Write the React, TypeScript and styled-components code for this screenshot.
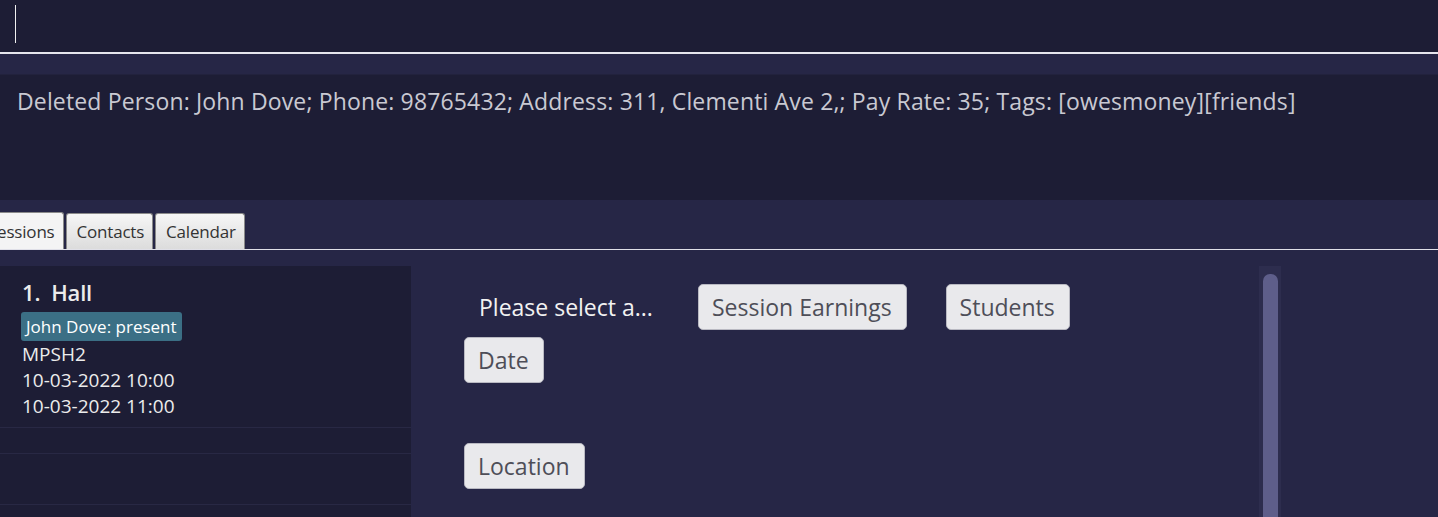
import React from "react";
import styled, { createGlobalStyle } from "styled-components";

const DARK = "#1d1d35";
const LIGHT = "#262646";

const Global = createGlobalStyle`
  html, body { margin: 0; padding: 0; background: ${LIGHT}; }
  body { font-family: "Open Sans", "Noto Sans", sans-serif; }
  * { box-sizing: border-box; }
`;

const Page = styled.div`
  width: 1438px;
  height: 517px;
  overflow: hidden;
  display: flex;
  flex-direction: column;
  background: ${LIGHT};
`;

const CommandBox = styled.div`
  height: 54px;
  flex: none;
  background: ${DARK};
  border-bottom: 2px solid #e6e6ee;
  padding: 5px 0 0 15px;
`;

const Caret = styled.div`
  width: 1px;
  height: 38px;
  background: #f0f0f0;
`;

const Strip = styled.div`
  height: 21px;
  flex: none;
  background: ${LIGHT};
  border-bottom: 1px solid #22223d;
`;

const ResultBox = styled.div`
  height: 125px;
  flex: none;
  background: ${DARK};
  padding: 11px 17px;
  color: #c9c9d2;
  font-size: 23px;
  line-height: 31px;
  white-space: nowrap;
  letter-spacing: 0.15px;
`;

const TabHeader = styled.div`
  flex: none;
  padding-top: 12px;
  border-bottom: 1px solid #e0e0e8;
`;

const TabRow = styled.div`
  display: flex;
  gap: 2px;
  margin-left: -23px;
  height: 37px;
  align-items: flex-end;
`;

const Tab = styled.div<{ $active?: boolean }>`
  height: ${(p) => (p.$active ? "37px" : "36px")};
  padding: 0 8px 0 10px;
  display: flex;
  align-items: center;
  font-size: 17px;
  color: #333;
  border: 1px solid #8a8a8a;
  border-bottom: none;
  border-radius: 3px 3px 0 0;
  background: ${(p) =>
    p.$active ? "#f4f4f4" : "linear-gradient(#f6f6f6, #dcdcdc)"};
  letter-spacing: -0.2px;
`;

const Content = styled.div`
  flex: 1;
  display: flex;
  padding-top: 16px;
  min-height: 0;
`;

const ListPanel = styled.div`
  width: 411px;
  flex: none;
  background: ${DARK};
  display: flex;
  flex-direction: column;
`;

const Card = styled.div`
  height: 162px;
  padding: 11px 22px;
  border-bottom: 1px solid #282844;
  display: flex;
  flex-direction: column;
  align-items: flex-start;
  color: #f0f0f0;
`;

const CardTitle = styled.div`
  font-size: 22px;
  font-weight: 600;
  line-height: 30px;
  letter-spacing: -0.2px;
  white-space: pre;
  color: #ececec;
`;

const TagChip = styled.div`
  margin-top: 5px;
  margin-left: -1px;
  background: #3b6f85;
  border-radius: 3px;
  padding: 0 5px;
  height: 29px;
  line-height: 29px;
  font-size: 17px;
  color: #fff;
`;

const Detail = styled.div`
  font-size: 19px;
  line-height: 26px;
  color: #ececec;
`;

const EmptyRow = styled.div<{ $h: number }>`
  height: ${(p) => p.$h}px;
  flex: none;
  border-bottom: 1px solid #282844;
`;

const Main = styled.div`
  flex: 1;
  display: flex;
`;

const Form = styled.div`
  width: 848px;
  flex: none;
  padding: 18px 0 0 53px;
  display: flex;
  flex-direction: column;
  align-items: flex-start;
`;

const FormRow = styled.div<{ $mt?: number }>`
  display: flex;
  align-items: center;
  margin-top: ${(p) => p.$mt ?? 0}px;
`;

const Prompt = styled.div`
  width: 234px;
  padding-left: 15px;
  font-size: 23px;
  color: #f2f2f2;
`;

const Btn = styled.div<{ $ml?: number }>`
  height: 46px;
  padding: 0 14px 0 13px;
  margin-left: ${(p) => p.$ml ?? 0}px;
  display: flex;
  align-items: center;
  background: #e9e9ec;
  border: 1px solid #b9b9c2;
  border-radius: 5px;
  font-size: 23px;
  color: #4e4e58;
`;

const ScrollTrack = styled.div`
  width: 22px;
  flex: none;
  background: #2d2d4e;
  padding: 8px 3px 0 4px;
`;

const ScrollThumb = styled.div`
  height: 100%;
  background: #5e5e8a;
  border-radius: 7px 7px 0 0;
`;

export default function App() {
  return (
    <>
      <Global />
      <Page>
        <CommandBox>
          <Caret />
        </CommandBox>
        <Strip />
        <ResultBox>
          Deleted Person: John Dove; Phone: 98765432; Address: 311, Clementi Ave 2,; Pay Rate: 35; Tags: [owesmoney][friends]
        </ResultBox>
        <TabHeader>
          <TabRow>
            <Tab $active>Sessions</Tab>
            <Tab>Contacts</Tab>
            <Tab>Calendar</Tab>
          </TabRow>
        </TabHeader>
        <Content>
          <ListPanel>
            <Card>
              <CardTitle>{"1.  Hall"}</CardTitle>
              <TagChip>John Dove: present</TagChip>
              <Detail>MPSH2</Detail>
              <Detail>10-03-2022 10:00</Detail>
              <Detail>10-03-2022 11:00</Detail>
            </Card>
            <EmptyRow $h={26} />
            <EmptyRow $h={51} />
            <EmptyRow $h={26} />
          </ListPanel>
          <Main>
            <Form>
              <FormRow>
                <Prompt>Please select a...</Prompt>
                <Btn>Session Earnings</Btn>
                <Btn $ml={39}>Students</Btn>
              </FormRow>
              <FormRow $mt={7}>
                <Btn>Date</Btn>
              </FormRow>
              <FormRow $mt={60}>
                <Btn>Location</Btn>
              </FormRow>
            </Form>
            <ScrollTrack>
              <ScrollThumb />
            </ScrollTrack>
          </Main>
        </Content>
      </Page>
    </>
  );
}
